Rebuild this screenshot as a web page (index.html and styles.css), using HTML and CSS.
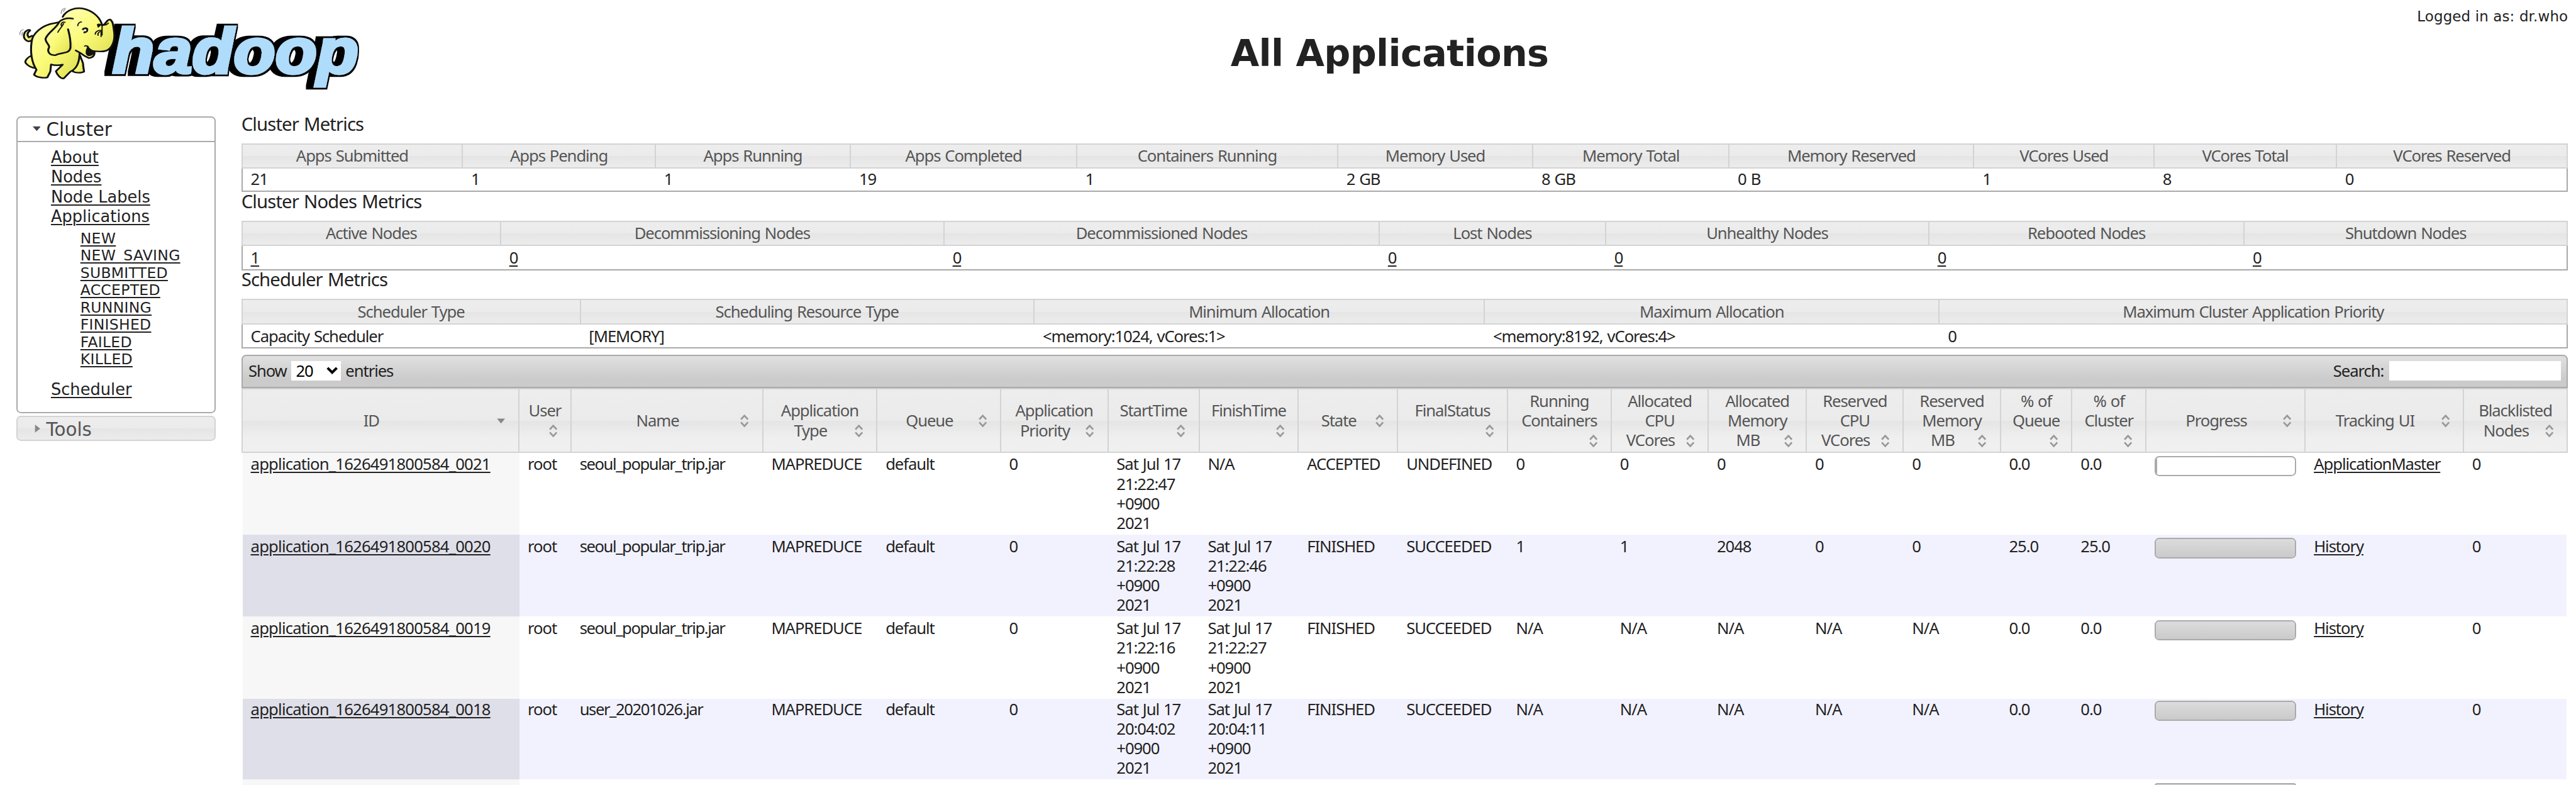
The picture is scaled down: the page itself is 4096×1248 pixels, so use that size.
FILE: index.html
```html
<!DOCTYPE html>
<html lang="en">
<head>
<meta charset="utf-8">
<title>All Applications</title>
<link rel="stylesheet" href="styles.css">
</head>
<body>
<svg class="defs" width="0" height="0">
  <symbol id="sort" viewBox="0 0 16 22"><path d="M2 8.5 8 2l6 6.500M2 13.500 8 20l6-6.500" fill="none" stroke="#999" stroke-width="3"/></symbol>
  <symbol id="sort-desc" viewBox="0 0 16 22"><path d="M1 7h14l-7 8.500z" fill="#888"/></symbol>
</svg>
<header class="top">
  <div class="logo">
    <svg width="660" height="170" viewBox="0 0 660 170" role="img" aria-label="hadoop">
      <defs>
        <linearGradient id="hide" x1="0" y1="0" x2="1" y2="1"><stop offset="0" stop-color="#ffffb8"/><stop offset=".5" stop-color="#fafa78"/><stop offset="1" stop-color="#dcdc50"/></linearGradient>
        <filter id="extrude" x="-10%" y="-20%" width="120%" height="150%">
          <feMorphology in="SourceAlpha" operator="dilate" radius="8 3" result="fat"/>
          <feOffset in="fat" dx="-5" dy="0" result="back"/>
          <feMerge><feMergeNode in="back"/><feMergeNode in="SourceGraphic"/></feMerge>
        </filter>
      </defs>
      <text class="wordmark" x="195" y="126" textLength="426" lengthAdjust="spacingAndGlyphs" filter="url(#extrude)">hadoop</text>
      <g transform="scale(.4209 .3333)" fill="url(#hide)" stroke="#111" stroke-width="8" stroke-linejoin="round" stroke-linecap="round">
        <path d="M126 212C110 222 95 200 99 178C102 162 118 150 124 158C112 170 110 182 118 194L132 186" />
        <path d="M128 290C112 298 100 318 106 328C116 344 130 352 150 356L160 320Z"/>
        <path d="M330 290C334 310 344 325 342 340L346 372C336 380 312 380 300 372L300 320Z"/>
        <path d="M225 120C170 130 132 178 130 218C124 270 130 325 150 362L140 388C150 402 180 407 195 402L207 372L210 335C226 341 244 340 258 336L230 370C235 390 250 409 262 408L290 372C314 358 328 330 328 262L300 100Z"/>
        <path d="M258 88C272 52 310 38 340 44C382 54 414 92 420 132C440 126 434 104 453 101C466 110 466 136 470 168C474 212 462 252 436 264C420 270 404 268 388 266C392 284 384 300 366 302C350 294 342 286 334 278L312 262"/>
        <path d="M386 266C372 262 364 256 360 242M360 252C354 270 356 284 366 288C374 288 384 280 388 266" fill="#111"/>
        <path d="M300 97C275 90 246 102 240 122C228 150 196 170 187 202C188 226 204 230 202 246C192 268 204 290 230 286C252 270 286 282 290 248C292 205 286 180 280 152"/>
        <path d="M320 134C320 122 328 114 335 114M252 132C250 120 258 112 268 116M262 122C254 140 240 160 238 168M348 240C354 234 362 240 364 246M424 130C432 132 440 128 446 120M392 178C392 164 404 156 418 158M404 184C400 172 408 164 418 162M416 190V168M420 130V182" fill="none" stroke-width="5"/>
        <path d="M338 152C346 140 360 142 362 154C362 168 350 172 344 170C350 164 350 158 338 152ZM400 128C406 122 414 124 416 130L404 142Z" fill="#111" stroke-width="3"/>
        <circle cx="350" cy="157" r="6" fill="#fff" stroke="none"/>
        <path d="M252 70C250 56 256 46 270 42M260 60L268 48M82 180C80 164 88 154 98 154M90 184L92 166" fill="none" stroke="#777" stroke-width="3"/>
      </g>
    </svg>
  </div>
  <h1>All Applications</h1>
  <div class="login">Logged in as: dr.who</div>
</header>
<div class="page">
  <nav class="side">
    <section class="panel">
      <h3><svg class="arrow" width="14" height="8" viewBox="0 0 14 8"><path d="M0 0h14L7 8z" fill="#444"/></svg><span>Cluster</span></h3>
      <ul class="menu">
        <li><a>About</a></li><li><a>Nodes</a></li><li><a>Node Labels</a></li><li><a>Applications</a>
          <ul class="sub">
            <li><a>NEW</a></li><li><a>NEW_SAVING</a></li><li><a>SUBMITTED</a></li><li><a>ACCEPTED</a></li><li><a>RUNNING</a></li><li><a>FINISHED</a></li><li><a>FAILED</a></li><li><a>KILLED</a></li>
          </ul>
        </li>
        <li><a>Scheduler</a></li>
      </ul>
    </section>
    <section class="panel closed">
      <h3><svg class="arrow" width="14" height="14" viewBox="0 0 14 14"><path d="M4 0v14l9-7z" fill="#888"/></svg><span>Tools</span></h3>
    </section>
  </nav>
  <main class="content">
    <h2>Cluster Metrics</h2>
    <table class="metrics cluster">
      <thead><tr><th>Apps Submitted</th><th>Apps Pending</th><th>Apps Running</th><th>Apps Completed</th><th>Containers Running</th><th>Memory Used</th><th>Memory Total</th><th>Memory Reserved</th><th>VCores Used</th><th>VCores Total</th><th>VCores Reserved</th></tr></thead>
      <tbody><tr><td>21</td><td>1</td><td>1</td><td>19</td><td>1</td><td>2 GB</td><td>8 GB</td><td>0 B</td><td>1</td><td>8</td><td>0</td></tr></tbody>
    </table>
    <h2>Cluster Nodes Metrics</h2>
    <table class="metrics nodes">
      <thead><tr><th>Active Nodes</th><th>Decommissioning Nodes</th><th>Decommissioned Nodes</th><th>Lost Nodes</th><th>Unhealthy Nodes</th><th>Rebooted Nodes</th><th>Shutdown Nodes</th></tr></thead>
      <tbody><tr><td><a>1</a></td><td><a>0</a></td><td><a>0</a></td><td><a>0</a></td><td><a>0</a></td><td><a>0</a></td><td><a>0</a></td></tr></tbody>
    </table>
    <h2>Scheduler Metrics</h2>
    <table class="metrics scheduler">
      <thead><tr><th>Scheduler Type</th><th>Scheduling Resource Type</th><th>Minimum Allocation</th><th>Maximum Allocation</th><th>Maximum Cluster Application Priority</th></tr></thead>
      <tbody><tr><td>Capacity Scheduler</td><td>[MEMORY]</td><td>&lt;memory:1024, vCores:1&gt;</td><td>&lt;memory:8192, vCores:4&gt;</td><td>0</td></tr></tbody>
    </table>
    <div class="toolbar">
      <span>Show</span>
      <div class="select">20<svg width="20" height="13" viewBox="0 0 20 13"><path d="M2 2l8 8 8-8" fill="none" stroke="#000" stroke-width="4.500"/></svg></div>
      <span>entries</span>
      <label class="search">Search:<input type="text"></label>
    </div>
    <table class="apps">
      <thead><tr>
        <th><div class="last"><svg class="icon"><use href="#sort-desc"/></svg>ID</div></th>
        <th><div>User</div><div class="own"><svg class="icon"><use href="#sort"/></svg></div></th>
        <th><div class="last"><svg class="icon"><use href="#sort"/></svg>Name</div></th>
        <th><div>Application</div><div class="last"><svg class="icon"><use href="#sort"/></svg>Type</div></th>
        <th><div class="last"><svg class="icon"><use href="#sort"/></svg>Queue</div></th>
        <th><div>Application</div><div class="last"><svg class="icon"><use href="#sort"/></svg>Priority</div></th>
        <th><div>StartTime</div><div class="own"><svg class="icon"><use href="#sort"/></svg></div></th>
        <th><div>FinishTime</div><div class="own"><svg class="icon"><use href="#sort"/></svg></div></th>
        <th><div class="last"><svg class="icon"><use href="#sort"/></svg>State</div></th>
        <th><div>FinalStatus</div><div class="own"><svg class="icon"><use href="#sort"/></svg></div></th>
        <th><div>Running</div><div>Containers</div><div class="own"><svg class="icon"><use href="#sort"/></svg></div></th>
        <th><div>Allocated</div><div>CPU</div><div class="last"><svg class="icon"><use href="#sort"/></svg>VCores</div></th>
        <th><div>Allocated</div><div>Memory</div><div class="last"><svg class="icon"><use href="#sort"/></svg>MB</div></th>
        <th><div>Reserved</div><div>CPU</div><div class="last"><svg class="icon"><use href="#sort"/></svg>VCores</div></th>
        <th><div>Reserved</div><div>Memory</div><div class="last"><svg class="icon"><use href="#sort"/></svg>MB</div></th>
        <th><div>% of</div><div>Queue</div><div class="own"><svg class="icon"><use href="#sort"/></svg></div></th>
        <th><div>% of</div><div>Cluster</div><div class="own"><svg class="icon"><use href="#sort"/></svg></div></th>
        <th><div class="last"><svg class="icon"><use href="#sort"/></svg>Progress</div></th>
        <th><div class="last"><svg class="icon"><use href="#sort"/></svg>Tracking UI</div></th>
        <th><div>Blacklisted</div><div class="last"><svg class="icon"><use href="#sort"/></svg>Nodes</div></th>
      </tr></thead>
      <tbody>
        <tr><td><a>application_1626491800584_0021</a></td><td>root</td><td>seoul_popular_trip.jar</td><td>MAPREDUCE</td><td>default</td><td>0</td><td>Sat Jul 17<br>21:22:47<br>+0900<br>2021</td><td>N/A</td><td>ACCEPTED</td><td>UNDEFINED</td><td>0</td><td>0</td><td>0</td><td>0</td><td>0</td><td>0.0</td><td>0.0</td><td><div class="bar"><div class="fill" style="width:1%"></div></div></td><td><a>ApplicationMaster</a></td><td>0</td></tr>
        <tr><td><a>application_1626491800584_0020</a></td><td>root</td><td>seoul_popular_trip.jar</td><td>MAPREDUCE</td><td>default</td><td>0</td><td>Sat Jul 17<br>21:22:28<br>+0900<br>2021</td><td>Sat Jul 17<br>21:22:46<br>+0900<br>2021</td><td>FINISHED</td><td>SUCCEEDED</td><td>1</td><td>1</td><td>2048</td><td>0</td><td>0</td><td>25.0</td><td>25.0</td><td><div class="bar"><div class="fill" style="width:100%"></div></div></td><td><a>History</a></td><td>0</td></tr>
        <tr><td><a>application_1626491800584_0019</a></td><td>root</td><td>seoul_popular_trip.jar</td><td>MAPREDUCE</td><td>default</td><td>0</td><td>Sat Jul 17<br>21:22:16<br>+0900<br>2021</td><td>Sat Jul 17<br>21:22:27<br>+0900<br>2021</td><td>FINISHED</td><td>SUCCEEDED</td><td>N/A</td><td>N/A</td><td>N/A</td><td>N/A</td><td>N/A</td><td>0.0</td><td>0.0</td><td><div class="bar"><div class="fill" style="width:100%"></div></div></td><td><a>History</a></td><td>0</td></tr>
        <tr class="tight"><td><a>application_1626491800584_0018</a></td><td>root</td><td>user_20201026.jar</td><td>MAPREDUCE</td><td>default</td><td>0</td><td>Sat Jul 17<br>20:04:02<br>+0900<br>2021</td><td>Sat Jul 17<br>20:04:11<br>+0900<br>2021</td><td>FINISHED</td><td>SUCCEEDED</td><td>N/A</td><td>N/A</td><td>N/A</td><td>N/A</td><td>N/A</td><td>0.0</td><td>0.0</td><td><div class="bar"><div class="fill" style="width:100%"></div></div></td><td><a>History</a></td><td>0</td></tr>
        <tr class="cut"><td></td><td></td><td></td><td></td><td></td><td></td><td></td><td></td><td></td><td></td><td></td><td></td><td></td><td></td><td></td><td></td><td></td><td><div class="bar"></div></td><td></td><td></td></tr>
      </tbody>
    </table>
  </main>
</div>
</body>
</html>
```
FILE: styles.css
```css
* { box-sizing: border-box; }
html { zoom: 0.918; overflow: hidden; background: #fff; }
body {
  margin: 0;
  width: 4461px;
  height: 1359px;
  overflow: hidden;
  background: #fff;
  color: #222;
  font: 28px/34px "Noto Sans", "Open Sans", sans-serif;
  letter-spacing: -1.2px;
  word-spacing: 1.500px;
  white-space: nowrap;
}
h1, h2, h3, ul { margin: 0; padding: 0; font-weight: normal; }
ul { list-style: none; }
a {
  text-decoration: underline;
  text-decoration-thickness: 2.2px;
  text-underline-offset: 3px;
}
.defs { display: block; width: 0; height: 0; }

.top {
  display: grid;
  grid-template-columns: 704px 3406px 338px;
  height: 198px;
  font-family: "DejaVu Sans", Verdana, sans-serif;
  word-spacing: 0;
}
.logo svg { display: block; }
.wordmark {
  font: italic bold 110px "Liberation Sans", Arial, sans-serif;
  letter-spacing: 0;
  fill: #b0dcfb;
  stroke: #b0dcfb;
  stroke-width: 5px;
}
.top h1 {
  padding-top: 52px;
  font-size: 64px;
  line-height: 80px;
  font-weight: bold;
  text-align: center;
  letter-spacing: -0.7px;
}
.login {
  padding-top: 12px;
  font-size: 25px;
  text-align: right;
  letter-spacing: 0.150px;
}

.page { display: flex; }
.side {
  width: 418px;
  padding: 4px 0 0 28px;
  font-family: "DejaVu Sans", Verdana, sans-serif;
  letter-spacing: 0;
  word-spacing: 0;
}
.panel {
  width: 346px;
  height: 514px;
  margin-bottom: 4px;
  border: 2.2px solid #aaa;
  border-radius: 8px;
}
.panel h3 {
  display: flex;
  align-items: center;
  gap: 10px;
  height: 42px;
  padding: 0 0 2px 26px;
  border-bottom: 2.2px solid #aaa;
  font-size: 32px;
}
.panel h3 span { padding-top: 4px; }
.panel.closed {
  height: 44px;
  border-color: #d3d3d3;
  background: linear-gradient(#ededed, #ebebeb 50%, #e5e5e5 51%, #ececec);
  color: #555;
}
.panel.closed h3 { border: 0; height: 40px; padding-bottom: 0; }
.menu { padding: 10px 0 0 58px; }
.sub {
  padding: 6px 0 20px 51px;
  font-size: 25.600px;
  line-height: 30px;
  letter-spacing: 0.300px;
}

.content { width: 4030px; }
.content h2 { height: 50px; padding-top: 1px; font-size: 32px; line-height: 32px; letter-spacing: -1px; }
table {
  width: 4030px;
  table-layout: fixed;
  border-collapse: separate;
  border-spacing: 0;
}
th, td { font-weight: normal; }
th {
  border: 2.2px solid #d3d3d3;
  border-left: 0;
  color: #555;
  text-align: center;
  background: linear-gradient(#ededed, #ebebeb 50%, #e5e5e5 51%, #efefef 78%, #f0f0f0);
}
th:first-child { border-left: 2.2px solid #d3d3d3; }
td { text-align: left; padding: 0 0 0 14px; }

.metrics th { height: 44px; padding: 0; background: linear-gradient(#ededed, #ebebeb 50%, #e5e5e5 51%, #ececec); }
.metrics td { height: 42px; border-bottom: 2.2px solid #aaa; }
.metrics td:first-child { border-left: 2.2px solid #aaa; }
.metrics td:last-child { border-right: 2.2px solid #aaa; }
.cluster td { height: 40px; padding-bottom: 2px; }
.cluster th:nth-child(1) { width: 384px; }
.cluster th:nth-child(2) { width: 334px; }
.cluster th:nth-child(3) { width: 338px; }
.cluster th:nth-child(4) { width: 392px; }
.cluster th:nth-child(5) { width: 452px; }
.cluster th:nth-child(6) { width: 338px; }
.cluster th:nth-child(7) { width: 340px; }
.cluster th:nth-child(8) { width: 424px; }
.cluster th:nth-child(9) { width: 312px; }
.cluster th:nth-child(10) { width: 316px; }
.cluster th:nth-child(11) { width: 400px; }
.nodes th:nth-child(1) { width: 450px; }
.nodes th:nth-child(2) { width: 768px; }
.nodes th:nth-child(3) { width: 754px; }
.nodes th:nth-child(4) { width: 392px; }
.nodes th:nth-child(5) { width: 560px; }
.nodes th:nth-child(6) { width: 546px; }
.nodes th:nth-child(7) { width: 560px; }
.scheduler th:nth-child(1) { width: 588px; }
.scheduler th:nth-child(2) { width: 786px; }
.scheduler th:nth-child(3) { width: 780px; }
.scheduler th:nth-child(4) { width: 788px; }
.scheduler th:nth-child(5) { width: 1088px; }

.toolbar {
  display: flex;
  align-items: center;
  gap: 8px;
  height: 58px;
  margin-top: 10px;
  padding: 0 10px 2px 10px;
  border: 2.2px solid #aaa;
  border-radius: 8px 8px 0 0;
  background: linear-gradient(#e0e0e0, #cbcbcb 75%);
}
.select {
  display: flex;
  align-items: center;
  justify-content: space-between;
  width: 86px;
  height: 34px;
  padding: 0 5px 0 8px;
  background: #fff;
  color: #000;
}
.search { display: flex; align-items: center; gap: 9px; margin-left: auto; }
.search input { width: 298px; height: 34px; padding: 0; border: 0; background: #fff; }

.apps th { height: 112px; padding: 1px 14px 0 14px; vertical-align: middle; }
.apps th div { height: 34px; }
.icon {
  float: right;
  width: 32px;
  height: 22px;
  margin-top: 7px;
}
.apps th:nth-child(1) { width: 482px; }
.apps th:nth-child(2) { width: 90px; }
.apps th:nth-child(3) { width: 332px; }
.apps th:nth-child(4) { width: 198px; }
.apps th:nth-child(5) { width: 214px; }
.apps th:nth-child(6) { width: 186px; }
.apps th:nth-child(7) { width: 158px; }
.apps th:nth-child(8) { width: 172px; }
.apps th:nth-child(9) { width: 172px; }
.apps th:nth-child(10) { width: 190px; }
.apps th:nth-child(11) { width: 180px; }
.apps th:nth-child(12) { width: 168px; }
.apps th:nth-child(13) { width: 170px; }
.apps th:nth-child(14) { width: 168px; }
.apps th:nth-child(15) { width: 168px; }
.apps th:nth-child(16) { width: 124px; }
.apps th:nth-child(17) { width: 128px; }
.apps th:nth-child(18) { width: 276px; }
.apps th:nth-child(19) { width: 274px; }
.apps th:nth-child(20) { width: 180px; }
.apps td { height: 142px; padding-top: 3px; vertical-align: top; }
.apps td:first-child { letter-spacing: -0.900px; }
.apps .tight td { height: 140px; padding-top: 1px; }
.apps td:nth-child(3) { letter-spacing: -1.6px; }
.apps tr:nth-child(even) td { background: #f2f2ff; }
.apps td:first-child { border-left: 2.2px solid #fff; background: #f7f7f7; }
.apps td:last-child { border-right: 2.2px solid #fff; }
.apps tbody tr:nth-child(even) td:first-child { background: #dfdfe9; }
.bar {
  width: 245px;
  height: 35px;
  margin-top: 3px;
  border: 2.2px solid #aaa;
  border-radius: 8px;
  background: #fff;
  overflow: hidden;
}
.fill { height: 100%; border-right: 2.2px solid #aaa; background: linear-gradient(#dcdcdc, #cacaca); }
.fill[style="width:100%"] { border-right: 0; }

/* the fifth row is only a sliver at the bottom of the window */
.apps .cut td { height: 9px; }
.cut .bar { height: 5px; border-bottom: 0; border-radius: 8px 8px 0 0; background: #dcdcdc; }
```
